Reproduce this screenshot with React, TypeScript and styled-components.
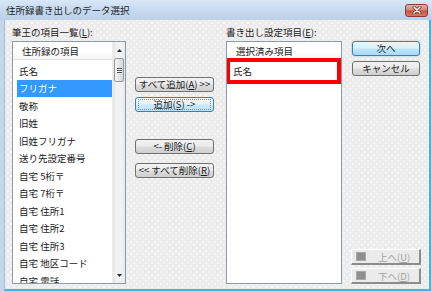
import React from 'react';
import styled, { createGlobalStyle } from 'styled-components';

const Global = createGlobalStyle`
  html, body { margin: 0; padding: 0; }
  body {
    width: 432px; height: 292px; overflow: hidden;
    font-family: "Noto Sans CJK JP", "Noto Sans", sans-serif;
  }
  u { text-decoration-thickness: 1px; text-underline-offset: 1px; }
`;

const Window = styled.div`
  width: 432px;
  height: 292px;
  box-sizing: border-box;
  display: flex;
  flex-direction: column;
  background: #c3d7ec;
  font-size: 9.5px;
  color: #1b1b1b;
`;

const TitleBar = styled.div`
  height: 20px;
  flex: none;
  display: flex;
  align-items: center;
  padding: 0 4px 0 6px;
  background: linear-gradient(to bottom, #d8e7f7 0%, #c8dbf0 45%, #bad0e9 100%);
`;

const Title = styled.span`
  flex: 1;
  font-size: 9.5px;
  line-height: 12px;
  color: #1f1f1f;
`;

const CloseButton = styled.div`
  width: 23px;
  height: 13px;
  box-sizing: border-box;
  border: 1px solid #8a3d33;
  border-radius: 3px;
  background: linear-gradient(to bottom, #eab0a4 0%, #d9806f 48%, #c7523d 52%, #d7775e 100%);
  display: flex;
  align-items: center;
  justify-content: center;
`;

const Client = styled.div`
  flex: 1;
  min-height: 0;
  margin: 0 1px 1px 4px;
  border-left: 1px solid #a7bdd5;
  border-right: 2px solid #3db6e2;
  border-bottom: 2px solid #3db6e2;
  background-color: #ececec;
  background-image:
    radial-gradient(circle, #fbfbfb 0.6px, transparent 0.9px),
    radial-gradient(circle, #fbfbfb 0.6px, transparent 0.9px);
  background-size: 6px 6px;
  background-position: 0 0, 3px 3px;
  display: flex;
  padding: 6px 8px 5px 7px;
`;

const ListColumn = styled.div<{ $width: number; $gapAfter: number }>`
  width: ${p => p.$width}px;
  flex: none;
  display: flex;
  flex-direction: column;
  margin-right: ${p => p.$gapAfter}px;
`;

const ButtonColumn = styled.div<{ $width: number; $top: number; $gapAfter: number }>`
  width: ${p => p.$width}px;
  flex: none;
  display: flex;
  flex-direction: column;
  padding-top: ${p => p.$top}px;
  margin-right: ${p => p.$gapAfter}px;
`;

const Label = styled.div`
  height: 12px;
  line-height: 12px;
  margin-bottom: 3px;
  white-space: nowrap;
  color: #1b1b1b;
`;

const ListBox = styled.div`
  flex: 1;
  min-height: 0;
  display: flex;
  border: 1px solid #8f9aa8;
  background: #ffffff;
  position: relative;
  overflow: hidden;
`;

const ListMain = styled.div`
  flex: 1;
  min-width: 0;
  display: flex;
  flex-direction: column;
`;

const Header = styled.div`
  height: 18px;
  flex: none;
  box-sizing: border-box;
  padding-left: 9px;
  display: flex;
  align-items: center;
  background: linear-gradient(to bottom, #ffffff 0%, #ffffff 50%, #f4f5f7 100%);
  border-bottom: 1px solid #e3e4e7;
  margin-bottom: 2px;
  white-space: nowrap;
`;

const Row = styled.div<{ $selected?: boolean }>`
  height: 17.5px;
  flex: none;
  margin-left: 4px;
  padding-left: 2px;
  display: flex;
  align-items: center;
  white-space: nowrap;
  background: ${p => (p.$selected ? '#3399ff' : 'transparent')};
  color: ${p => (p.$selected ? '#ffffff' : '#1b1b1b')};
`;

const ScrollBar = styled.div`
  width: 12px;
  flex: none;
  display: flex;
  flex-direction: column;
  background: linear-gradient(to right, #e4e4e4 0%, #f2f2f2 30%, #f2f2f2 70%, #e8e8e8 100%);
  border-left: 1px solid #ededed;
`;

const ScrollArrow = styled.div`
  height: 16px;
  flex: none;
  display: flex;
  align-items: center;
  justify-content: center;
`;

const Thumb = styled.div`
  height: 24px;
  flex: none;
  margin: 0 1px;
  box-sizing: border-box;
  border: 1px solid #979797;
  border-radius: 2px;
  background: linear-gradient(to right, #f5f5f5 0%, #e6e6e6 50%, #d6d6d6 100%);
  display: flex;
  flex-direction: column;
  align-items: center;
  justify-content: center;
  gap: 1px;
`;

const Grip = styled.div`
  width: 5px;
  height: 1px;
  background: #505050;
  box-shadow: 0 1px 0 #ffffff;
`;

const Track = styled.div`
  flex: 1;
`;

const Highlight = styled.div`
  position: absolute;
  left: -1px;
  top: 16px;
  width: 115px;
  height: 26px;
  box-sizing: border-box;
  border: 4px solid #ff0000;
  pointer-events: none;
`;

type Variant = 'normal' | 'focus' | 'default';

const PushButton = styled.div<{ $variant?: Variant; $gapBefore?: number }>`
  height: 15px;
  flex: none;
  box-sizing: border-box;
  margin-top: ${p => p.$gapBefore ?? 0}px;
  border: 1px solid ${p => (p.$variant && p.$variant !== 'normal' ? '#3c7fb1' : '#707070')};
  border-radius: 3px;
  background: ${p =>
    p.$variant === 'default'
      ? 'linear-gradient(to bottom, #eaf6fd 0%, #d9f0fc 48%, #bee6fd 52%, #a7d9f5 100%)'
      : p.$variant === 'focus'
      ? 'linear-gradient(to bottom, #f0f8fd 0%, #e3f2fc 48%, #cbe8f9 52%, #bfe1f5 100%)'
      : 'linear-gradient(to bottom, #f2f2f2 0%, #ebebeb 48%, #dddddd 52%, #cfcfcf 100%)'};
  box-shadow: ${p => (p.$variant === 'default' ? '0 0 2px #7ec4ea' : 'none')};
  display: flex;
  align-items: center;
  justify-content: center;
  white-space: nowrap;
  line-height: 1;
  color: #1b1b1b;
  position: relative;

  &::after {
    content: '';
    display: ${p => (p.$variant === 'focus' ? 'block' : 'none')};
    position: absolute;
    inset: 1px 2px;
    border: 1px dotted #6f8fa8;
  }
`;

const SideButton = styled(PushButton)`
  margin-left: 1px;
  margin-right: 1px;
`;

const Spacer = styled.div`
  flex: 1;
`;

const FlatButton = styled.div<{ $gapBefore?: number }>`
  height: 16px;
  flex: none;
  box-sizing: border-box;
  margin-top: ${p => p.$gapBefore ?? 0}px;
  border-top: 1px solid #ffffff;
  border-left: 1px solid #ffffff;
  border-right: 2px solid #8c8c8c;
  border-bottom: 2px solid #8c8c8c;
  background: #ebebeb;
  display: flex;
  align-items: center;
  padding-left: 4px;
  gap: 12px;
  color: #a2a2a2;
  white-space: nowrap;
`;

const GrayIcon = styled.span`
  width: 10px;
  height: 9px;
  background: #8f8f8f;
  border: 1px solid #a8a8a8;
  box-sizing: border-box;
  flex: none;
`;

const items = [
  '氏名',
  'フリガナ',
  '敬称',
  '旧姓',
  '旧姓フリガナ',
  '送り先設定番号',
  '自宅 5桁〒',
  '自宅 7桁〒',
  '自宅 住所1',
  '自宅 住所2',
  '自宅 住所3',
  '自宅 地区コード',
  '自宅 電話',
];

export default function App() {
  return (
    <>
      <Global />
      <Window>
        <TitleBar>
          <Title>住所録書き出しのデータ選択</Title>
          <CloseButton>
            <svg width="10" height="8" viewBox="0 0 10 8">
              <path d="M2 1 L8 7 M8 1 L2 7" stroke="#6b2a22" strokeWidth="3" strokeLinecap="round" />
              <path d="M2 1 L8 7 M8 1 L2 7" stroke="#ffffff" strokeWidth="1.6" strokeLinecap="round" />
            </svg>
          </CloseButton>
        </TitleBar>
        <Client>
          <ListColumn $width={114} $gapAfter={9}>
            <Label>
              筆王の項目一覧(<u>L</u>):
            </Label>
            <ListBox>
              <ListMain>
                <Header>住所録の項目</Header>
                {items.map((t, i) => (
                  <Row key={t} $selected={i === 1}>
                    {t}
                  </Row>
                ))}
              </ListMain>
              <ScrollBar>
                <ScrollArrow>
                  <svg width="5" height="3" viewBox="0 0 5 3">
                    <path d="M0 3 L2.5 0 L5 3 Z" fill="#2a2a2a" />
                  </svg>
                </ScrollArrow>
                <Thumb>
                  <Grip />
                  <Grip />
                  <Grip />
                </Thumb>
                <Track />
                <ScrollArrow>
                  <svg width="5" height="3" viewBox="0 0 5 3">
                    <path d="M0 0 L5 0 L2.5 3 Z" fill="#2a2a2a" />
                  </svg>
                </ScrollArrow>
              </ScrollBar>
            </ListBox>
          </ListColumn>

          <ButtonColumn $width={79} $top={51} $gapAfter={12}>
            <PushButton $variant="normal">
              すべて追加(<u>A</u>) &gt;&gt;
            </PushButton>
            <PushButton $variant="focus" $gapBefore={5}>
              追加(<u>S</u>) -&gt;
            </PushButton>
            <PushButton $variant="normal" $gapBefore={27}>
              &lt;- 削除(<u>C</u>)
            </PushButton>
            <PushButton $variant="normal" $gapBefore={9}>
              &lt;&lt; すべて削除(<u>R</u>)
            </PushButton>
          </ButtonColumn>

          <ListColumn $width={116} $gapAfter={9}>
            <Label>
              書き出し設定項目(<u>E</u>):
            </Label>
            <ListBox>
              <ListMain>
                <Header>選択済み項目</Header>
                <Row>氏名</Row>
              </ListMain>
              <Highlight />
            </ListBox>
          </ListColumn>

          <ButtonColumn $width={70} $top={15} $gapAfter={0}>
            <SideButton $variant="default">次へ</SideButton>
            <SideButton $variant="normal" $gapBefore={5}>
              キャンセル
            </SideButton>
            <Spacer />
            <FlatButton>
              <GrayIcon />
              <span>
                上へ(<u>U</u>)
              </span>
            </FlatButton>
            <FlatButton $gapBefore={3}>
              <GrayIcon />
              <span>
                下へ(<u>D</u>)
              </span>
            </FlatButton>
          </ButtonColumn>
        </Client>
      </Window>
    </>
  );
}
